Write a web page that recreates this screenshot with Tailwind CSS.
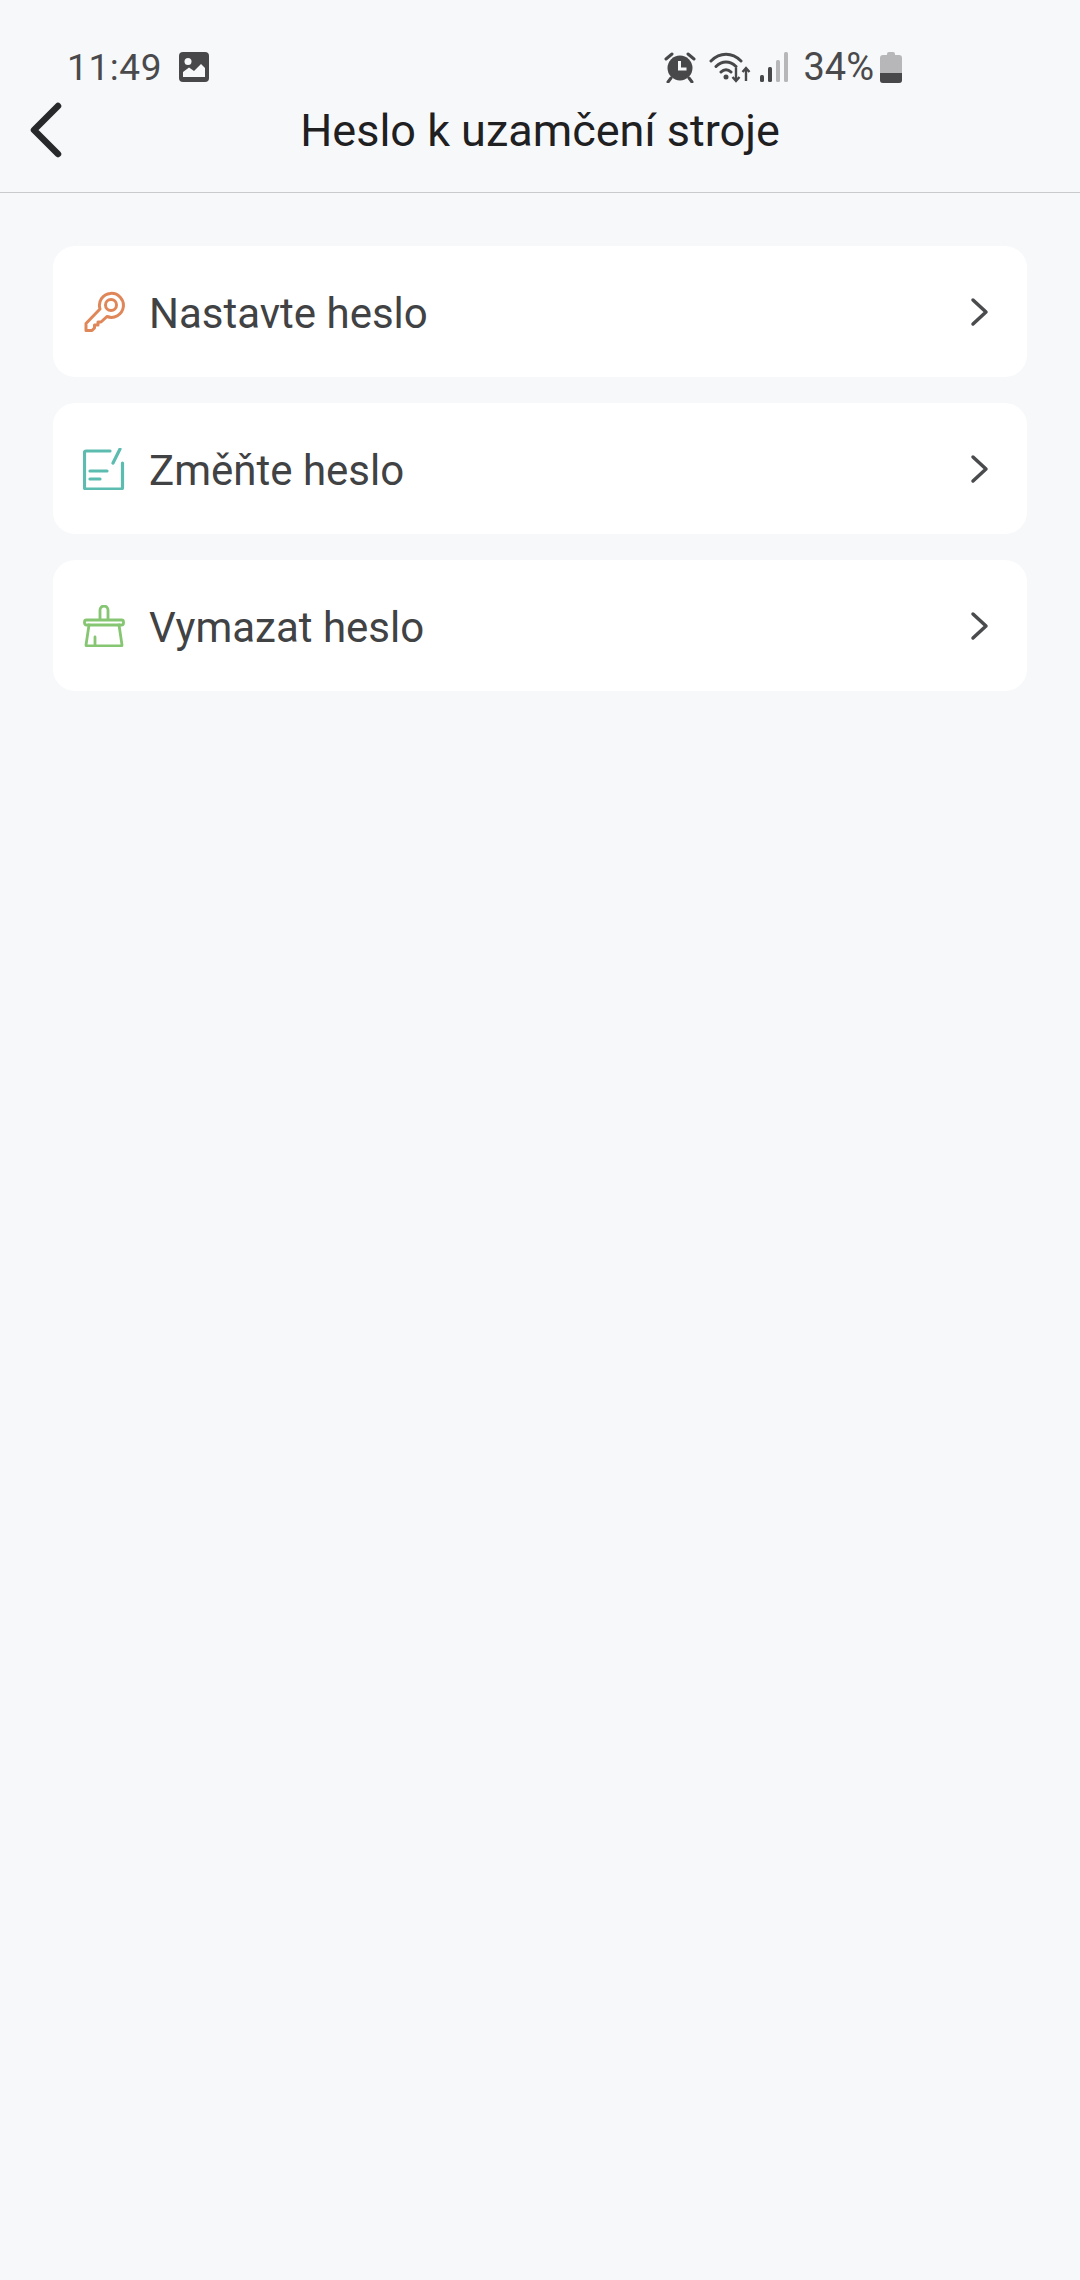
<!DOCTYPE html>
<html lang="cs">
<head>
  <meta charset="UTF-8">
  <meta name="viewport" content="width=device-width, initial-scale=1.0">
  <title>Heslo k uzamčení stroje</title>
  <script src="https://cdn.jsdelivr.net/npm/@tailwindcss/browser@4"></script>
</head>
<body class="bg-[#f7f8fa] font-['Roboto',sans-serif]">
  <div class="w-[1080px] h-[2280px] overflow-hidden flex flex-col">
    <!-- status bar -->
    <div class="h-[46px] mt-[44px] pl-[67px] pr-[178px] flex items-center justify-between text-[#4a4a4c]">
      <div class="flex items-center gap-[17px]">
        <span class="text-[37px] leading-none tracking-[0.6px]">11:49</span>
        <svg width="30" height="30" viewBox="0 0 30 30">
          <rect width="30" height="30" rx="4" fill="#48484a"/>
          <circle cx="9" cy="9.500" r="3.500" fill="#f7f8fa"/>
          <path d="M4 25v-5l6-4.500 5 3.500 7-7 4 4v9z" fill="#f7f8fa"/>
        </svg>
      </div>
      <div class="flex items-center">
        <svg width="32" height="32" viewBox="0 0 32 32" class="mr-[13px]">
          <circle cx="16" cy="17" r="12.500" fill="#48484a"/>
          <path d="M15.500 10v8h7" fill="none" stroke="#f7f8fa" stroke-width="3"/>
          <path d="M2 8l6-5M30 8l-6-5M7 27l-3 4M25 27l3 4" stroke="#48484a" stroke-width="3" stroke-linecap="round"/>
        </svg>
        <svg width="42" height="32" viewBox="0 0 42 32" class="mr-[8px]">
          <path d="M2 10c9-9 21-9 30 0M7 15.500c6-6 14-6 20 0M12 21c3-3 7-3 10 0" fill="none" stroke="#48484a" stroke-width="3" stroke-linecap="round"/>
          <circle cx="17" cy="26" r="2.500" fill="#48484a"/>
          <path d="M27 17v13M23.500 26l3.500 4 3.500-4M37 30V17M33.500 21l3.500-4 3.500 4" fill="none" stroke="#48484a" stroke-width="2.400"/>
        </svg>
        <svg width="30" height="32" viewBox="0 0 30 32" class="mr-[14px]">
          <rect x="1" y="24" width="4" height="7" rx="1.500" fill="#48484a"/>
          <rect x="9" y="16" width="4" height="15" rx="1.500" fill="#48484a"/>
          <rect x="17" y="9" width="4" height="22" rx="1.500" fill="#b7b7b9"/>
          <rect x="25" y="1" width="4" height="30" rx="1.500" fill="#b7b7b9"/>
        </svg>
        <span class="text-[38px] leading-none">34%</span>
        <svg width="22" height="32" viewBox="0 0 22 32" class="ml-[6px]">
          <path d="M7 3q0-2 2-2h4q2 0 2 2v1h4q3 0 3 3v22q0 3-3 3H3q-3 0-3-3V7q0-3 3-3h4z" fill="#b7b7b9"/>
          <path d="M0 22h22v7q0 3-3 3H3q-3 0-3-3z" fill="#48484a"/>
        </svg>
      </div>
    </div>

    <!-- header -->
    <div class="relative h-[103px] pb-[22px] border-b border-[#c9cacc] flex items-center justify-center">
      <svg width="36" height="56" viewBox="0 0 36 56" class="absolute left-[27px] top-[12px]">
        <path d="M31 4 7 28l24 24" fill="none" stroke="#28292b" stroke-width="6.500" stroke-linecap="round" stroke-linejoin="round"/>
      </svg>
      <h1 class="text-[45px] leading-none font-normal text-[#1f2022]">Heslo k uzamčení stroje</h1>
    </div>

    <!-- menu -->
    <div class="px-[53px] pt-[53px] flex flex-col gap-[26px]">
      <div class="h-[131px] bg-white rounded-[22px] pl-[30px] pr-[34px] flex items-center">
        <svg width="42" height="42" viewBox="0 0 42 42" class="mr-[24px]">
          <path d="M17 18 3 32.500v7h6l2.500-2.500v-3H15v-3h3l6-5.500A12 12 0 1 0 17 18z" fill="none" stroke="#e0875a" stroke-width="3" stroke-linejoin="round"/>
          <circle cx="28" cy="14" r="5.500" fill="none" stroke="#e0875a" stroke-width="3"/>
        </svg>
        <span class="flex-1 pt-[4px] text-[42px] leading-none text-[#414244]">Nastavte heslo</span>
        <svg width="24" height="30" viewBox="0 0 24 30">
          <path d="M4 3l13 12L4 27" fill="none" stroke="#4a4b4d" stroke-width="3.500" stroke-linecap="round" stroke-linejoin="round"/>
        </svg>
      </div>

      <div class="h-[131px] bg-white rounded-[22px] pl-[30px] pr-[34px] flex items-center">
        <svg width="42" height="42" viewBox="0 0 42 42" class="mr-[24px]">
          <path d="M27 3H3q-1.500 0-1.500 1.500v35Q1.500 41 3 41h35q1.500 0 1.500-1.500V15" fill="none" stroke="#5cbcb0" stroke-width="3.200" stroke-linecap="round"/>
          <path d="M30 15 37 1M7 23h17M7 31h10" fill="none" stroke="#5cbcb0" stroke-width="3.200" stroke-linecap="round"/>
        </svg>
        <span class="flex-1 pt-[4px] text-[42px] leading-none text-[#414244]">Změňte heslo</span>
        <svg width="24" height="30" viewBox="0 0 24 30">
          <path d="M4 3l13 12L4 27" fill="none" stroke="#4a4b4d" stroke-width="3.500" stroke-linecap="round" stroke-linejoin="round"/>
        </svg>
      </div>

      <div class="h-[131px] bg-white rounded-[22px] pl-[30px] pr-[34px] flex items-center">
        <svg width="42" height="42" viewBox="0 0 42 42" class="mr-[24px]">
          <path d="M17 15V5a4 4 0 0 1 8 0v10" fill="none" stroke="#86c673" stroke-width="2.800"/>
          <rect x="1.500" y="15" width="39" height="5" rx="2" fill="none" stroke="#86c673" stroke-width="2.800"/>
          <path d="M6 20 3 40q0 1 1.500 1h33q1.500 0 1.500-1l-3-20M12 41v-9" fill="none" stroke="#86c673" stroke-width="2.800" stroke-linejoin="round" stroke-linecap="round"/>
        </svg>
        <span class="flex-1 pt-[4px] text-[42px] leading-none text-[#414244]">Vymazat heslo</span>
        <svg width="24" height="30" viewBox="0 0 24 30">
          <path d="M4 3l13 12L4 27" fill="none" stroke="#4a4b4d" stroke-width="3.500" stroke-linecap="round" stroke-linejoin="round"/>
        </svg>
      </div>
    </div>
  </div>
</body>
</html>
